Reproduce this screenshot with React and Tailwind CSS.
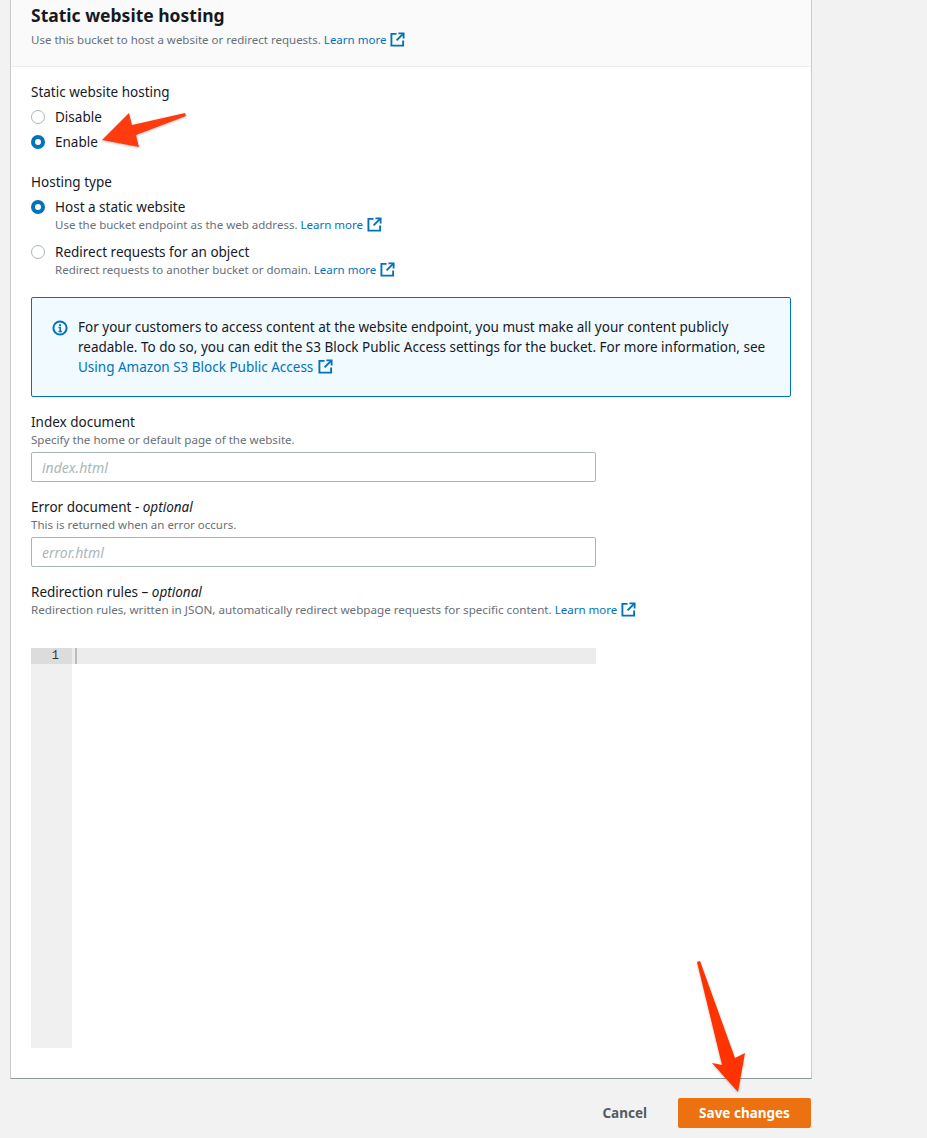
import React from "react";

const FONT = "font-['Noto_Sans','Open_Sans',sans-serif]";

const External = ({ className = "" }) => (
  <svg viewBox="0 0 16 16" className={`inline-block w-[15px] h-[15px] ${className}`} fill="none" stroke="#0073bb" strokeWidth="2">
    <path d="M7 2H1.5v12.5H14V9" />
    <path d="M9 1.5h5.5V7" />
    <path d="M14.2 1.8 7 9" />
  </svg>
);

const LearnMore = () => (
  <>
    <span className="text-[#0073bb] text-[11.5px]">Learn more</span>
    <External className="ml-[4px] align-[-3px]" />
  </>
);

const Radio = ({ checked }) =>
  checked ? (
    <span className="w-[14px] h-[14px] rounded-full border-[4px] border-[#0073bb] bg-white shrink-0" />
  ) : (
    <span className="w-[14px] h-[14px] rounded-full border border-[#aab7b8] bg-white shrink-0" />
  );

const RadioRow = ({ checked, label, className = "" }) => (
  <div className={`flex items-center gap-[10px] h-[20px] text-[13.5px] leading-[20px] text-[#16191f] ${className}`}>
    <Radio checked={checked} />
    <span>{label}</span>
  </div>
);

const Sub = ({ children, className = "" }) => (
  <div className={`h-[18px] leading-[18px] text-[#687078] ${className}`}>{children}</div>
);

const Label = ({ children, className = "" }) => (
  <div className={`h-[20px] leading-[20px] text-[13.5px] text-[#16191f] ${className}`}>{children}</div>
);

const TextInput = ({ placeholder }) => (
  <div className="w-[565px] h-[30px] mt-[3px] px-[10px] flex items-center border border-[#aab7b8] rounded-[2px] bg-white italic text-[14px] text-[#aab7b8]">
    {placeholder}
  </div>
);

export default function App() {
  return (
    <div className={`relative min-h-[1138px] h-[1138px] overflow-hidden bg-[#f2f2f2] ${FONT}`}>
      <div className="ml-[10px] w-[802px] h-[1079px] bg-white border-x border-[#c8cccc] border-b border-b-[#8d9999]">
        <div className="h-[67px] bg-[#fafafa] border-b border-[#eaeded] px-[20px]">
          <div className="h-[30px] leading-[30px] text-[17.5px] font-bold text-[#16191f]">Static website hosting</div>
          <div className="h-[20px] leading-[20px] text-[11.5px] text-[#687078]">
            Use this bucket to host a website or redirect requests. <LearnMore />
          </div>
        </div>

        <div className="px-[20px] pt-[15px]">
          <Label>Static website hosting</Label>
          <RadioRow label="Disable" className="mt-[5px]" />
          <RadioRow checked label="Enable" className="mt-[5px]" />

          <Label className="mt-[20px]">Hosting type</Label>
          <RadioRow checked label="Host a static website" className="mt-[5px]" />
          <Sub className="ml-[24px] -mt-[1px] text-[11.5px]">
            Use the bucket endpoint as the web address. <LearnMore />
          </Sub>
          <RadioRow label="Redirect requests for an object" className="mt-[8px]" />
          <Sub className="ml-[24px] -mt-[1px] text-[11.5px]">
            Redirect requests to another bucket or domain. <LearnMore />
          </Sub>

          <div className="mt-[18px] w-[760px] h-[100px] flex gap-[10px] pl-[20px] pt-[19px] bg-[#f1faff] border border-[#0073bb] rounded-[2px]">
            <svg viewBox="0 0 16 16" className="w-[16px] h-[16px] mt-[3px] shrink-0" fill="none" stroke="#0073bb" strokeWidth="2">
              <circle cx="8" cy="8" r="6.6" />
              <path d="M6.5 7.5H8.2V11.5M6.5 11.5H10" strokeWidth="1.5" />
              <path d="M8 4.2V6" />
            </svg>
            <div className="text-[13.5px] leading-[20px] text-[#16191f] w-[700px]">
              <div>For your customers to access content at the website endpoint, you must make all your content publicly</div>
              <div>readable. To do so, you can edit the S3 Block Public Access settings for the bucket. For more information, see</div>
              <div>
                <span className="text-[#0073bb]">Using Amazon S3 Block Public Access</span>
                <External className="ml-[5px] align-[-2px]" />
              </div>
            </div>
          </div>

          <Label className="mt-[15px]">Index document</Label>
          <Sub className="-mt-[1px] text-[11.6px]">Specify the home or default page of the website.</Sub>
          <TextInput placeholder="index.html" />

          <Label className="mt-[15px]">
            Error document - <i>optional</i>
          </Label>
          <Sub className="-mt-[1px] text-[11.5px]">This is returned when an error occurs.</Sub>
          <TextInput placeholder="error.html" />

          <Label className="mt-[15px]">
            Redirection rules – <i>optional</i>
          </Label>
          <Sub className="-mt-[1px] text-[11.65px]">
            Redirection rules, written in JSON, automatically redirect webpage requests for specific content. <LearnMore />
          </Sub>

          <div className="mt-[29px] w-[565px] h-[400px] flex">
            <div className="w-[41px] h-full bg-[#f0f0f0]">
              <div className="h-[16px] leading-[16px] bg-[#dcdcdc] text-[12px] text-[#333] text-right pr-[13px] font-['Liberation_Mono',monospace]">1</div>
            </div>
            <div className="flex-1 h-[16px] bg-[#ececec] pl-[3px]">
              <div className="w-[2px] h-[16px] bg-[#bbb]" />
            </div>
          </div>
        </div>
      </div>

      <div className="ml-[10px] w-[801px] mt-[19px] flex items-center justify-end">
        <span className="text-[13.5px] font-bold text-[#545b64] mr-[31px]">Cancel</span>
        <div className="w-[133px] h-[30px] flex items-center justify-center rounded-[2px] bg-[#ec7211] text-[13.5px] font-bold text-white">
          Save changes
        </div>
      </div>

      {/* annotation arrows */}
      <svg className="absolute left-0 top-0 pointer-events-none drop-shadow-[0_1px_1px_rgba(0,0,0,0.25)]" width="927" height="1138">
        <polygon points="185,113 186,116 136,135 139,147 102,140 129,113 132,125" fill="#ff3b0f" />
        <polygon points="697,962 700,961 735,1058 745,1053 738,1092 712,1063 722,1065" fill="#ff3300" />
      </svg>
    </div>
  );
}
